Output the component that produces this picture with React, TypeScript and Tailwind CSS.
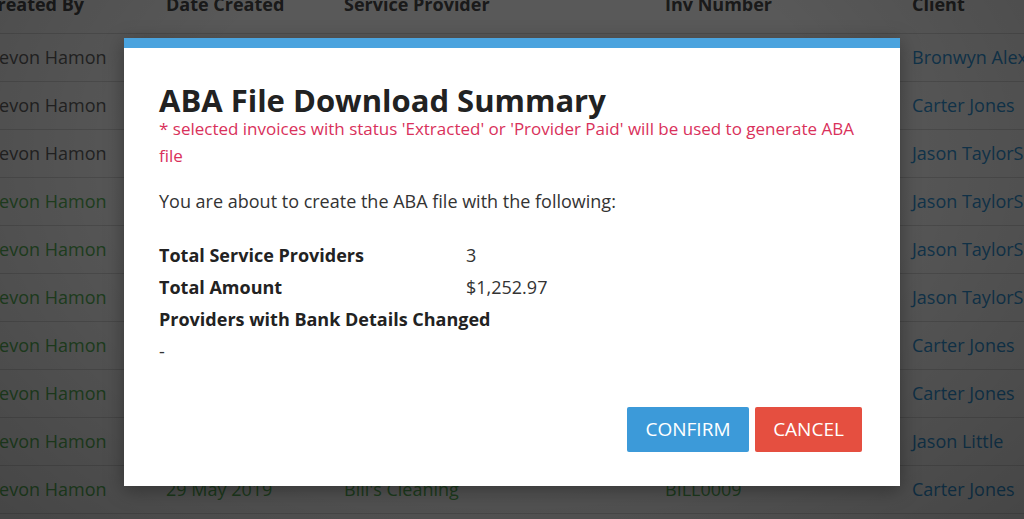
const rows = [
  { by: 'Devon Hamon', date: '02 Jun 2019', provider: 'Green Gardens', inv: 'INV-1021', client: 'Bronwyn Alexander', done: false },
  { by: 'Devon Hamon', date: '01 Jun 2019', provider: 'Home Helpers', inv: 'HH-0042', client: 'Carter Jones', done: false },
  { by: 'Devon Hamon', date: '31 May 2019', provider: 'Allied Physio', inv: 'AP-7781', client: 'Jason TaylorSmith', done: false },
  { by: 'Devon Hamon', date: '31 May 2019', provider: 'Allied Physio', inv: 'AP-7779', client: 'Jason TaylorSmith', done: true },
  { by: 'Devon Hamon', date: '30 May 2019', provider: 'Care Transport', inv: 'CT-3310', client: 'Jason TaylorSmith', done: true },
  { by: 'Devon Hamon', date: '30 May 2019', provider: 'Care Transport', inv: 'CT-3309', client: 'Jason TaylorSmith', done: true },
  { by: 'Devon Hamon', date: '29 May 2019', provider: "Bill's Cleaning", inv: 'BILL0011', client: 'Carter Jones', done: true },
  { by: 'Devon Hamon', date: '29 May 2019', provider: "Bill's Cleaning", inv: 'BILL0010', client: 'Carter Jones', done: true },
  { by: 'Devon Hamon', date: '29 May 2019', provider: 'Speech Works', inv: 'SW-0193', client: 'Jason Little', done: true },
  { by: 'Devon Hamon', date: '29 May 2019', provider: "Bill's Cleaning", inv: 'BILL0009', client: 'Carter Jones', done: true },
];

const summary = [
  { label: 'Total Service Providers', value: '3' },
  { label: 'Total Amount', value: '$1,252.97' },
  { label: 'Providers with Bank Details Changed', value: '' },
];

export default function App() {
  return (
    <div className="relative h-[519px] w-[1024px] overflow-hidden bg-white font-['Open_Sans',sans-serif]">
      {/* invoice table behind the dialog */}
      <div className="-ml-[14px] -mt-[24px] w-[1100px]">
        <div className="grid h-[58px] grid-cols-[180px_178px_321px_247px_1fr] items-center border-b border-[#dddddd] text-[18px] font-bold text-[#4a4a4a]">
          <div>Created By</div>
          <div>Date Created</div>
          <div>Service Provider</div>
          <div>Inv Number</div>
          <div>Client</div>
        </div>
        {rows.map((r, i) => (
          <div
            key={i}
            className={`grid h-[48px] grid-cols-[180px_178px_321px_247px_1fr] items-center border-b border-[#dddddd] text-[18px] ${
              r.done ? 'text-[#5cb85c]' : 'text-[#666666]'
            }`}
          >
            <div className="whitespace-nowrap">{r.by}</div>
            <div className="whitespace-nowrap">{r.date}</div>
            <div className="whitespace-nowrap">{r.provider}</div>
            <div className="whitespace-nowrap">{r.inv}</div>
            <div className="whitespace-nowrap text-[#3498db]">{r.client}</div>
          </div>
        ))}
      </div>

      {/* backdrop */}
      <div className="absolute inset-0 bg-black/65" />
      <div className="absolute inset-0 bg-[radial-gradient(ellipse_at_50%_30%,rgba(0,0,0,0)_45%,rgba(0,0,0,0.22)_100%)]" />

      {/* dialog */}
      <div className="absolute inset-0">
        <div className="mx-auto mt-[38px] w-[776px] border-t-[10px] border-[#4aa3de] bg-white px-[35px] pb-[34px] pt-[37px] shadow-[0_4px_18px_rgba(0,0,0,0.35)]">
          <h2 className="whitespace-nowrap text-[31px] font-bold leading-[30px] text-[#222]">
            ABA File Download Summary
          </h2>
          <p className="text-[17px] leading-[27px] text-[#d9315b]">
            * selected invoices with status 'Extracted' or 'Provider Paid' will be used to generate ABA file
          </p>
          <p className="mt-[20px] text-[18px] leading-[24px] text-[#333]">
            You are about to create the ABA file with the following:
          </p>
          <div className="mt-[26px] text-[18px] text-[#333]">
            {summary.map((s) => (
              <div key={s.label} className="flex h-[32px] items-center">
                <div className="w-[307px] shrink-0 whitespace-nowrap font-bold text-[#222]">{s.label}</div>
                <div>{s.value}</div>
              </div>
            ))}
            <div className="flex h-[32px] items-center">-</div>
          </div>
          <div className="mt-[40px] flex justify-end gap-[6px] pr-[3px]">
            <button className="h-[45px] w-[122px] rounded-[2px] bg-[#3c9ad9] text-[19px] text-white">
              CONFIRM
            </button>
            <button className="h-[45px] w-[107px] rounded-[2px] bg-[#e54f40] text-[19px] text-white">
              CANCEL
            </button>
          </div>
        </div>
      </div>
    </div>
  );
}
